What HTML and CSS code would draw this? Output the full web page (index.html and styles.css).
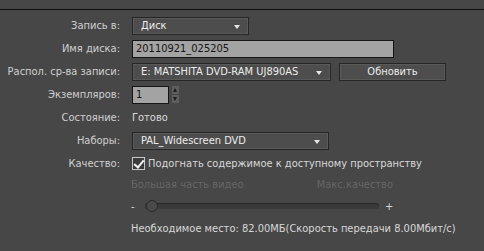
FILE: index.html
```html
<!DOCTYPE html>
<html lang="ru">
<head>
    <meta charset="UTF-8">
    <title>Запись на диск</title>
    <link rel="stylesheet" href="styles.css">
</head>
<body>
    <div class="topbar"></div>

    <div class="form">
        <label class="label">Запись в:</label>
        <div class="field">
            <div class="select w-disk">Диск<span class="arrow"></span></div>
        </div>

        <label class="label">Имя диска:</label>
        <div class="field">
            <div class="textbox w-name">20110921_025205</div>
        </div>

        <label class="label">Распол. ср-ва записи:</label>
        <div class="field">
            <div class="select w-drive">E: MATSHITA DVD-RAM UJ890AS<span class="arrow"></span></div>
            <button class="button">Обновить</button>
        </div>

        <label class="label">Экземпляров:</label>
        <div class="field">
            <div class="textbox w-copies">1</div>
            <div class="spin">
                <span class="spin-up"></span>
                <span class="spin-down"></span>
            </div>
        </div>

        <label class="label">Состояние:</label>
        <div class="field value">Готово</div>

        <label class="label">Наборы:</label>
        <div class="field">
            <div class="select w-preset">PAL_Widescreen DVD<span class="arrow"></span></div>
        </div>

        <label class="label">Качество:</label>
        <div class="field value">
            <span class="check"></span>
            Подогнать содержимое к доступному пространству
        </div>
    </div>

    <div class="quality">
        <div class="quality-labels">
            <span>Большая часть видео</span>
            <span>Макс.качество</span>
        </div>
        <div class="slider-row">
            <span class="sign">-</span>
            <div class="track"><span class="thumb"></span></div>
            <span class="sign">+</span>
        </div>
        <div class="info">Необходимое место: 82.00МБ(Скорость передачи 8.00Мбит/с)</div>
    </div>
</body>
</html>
```

FILE: styles.css
```css
* {
    margin: 0;
    padding: 0;
    box-sizing: border-box;
}

body {
    font-family: 'DejaVu Sans Condensed', 'DejaVu Sans', Tahoma, sans-serif;
    font-size: 11px;
    background-color: #474747;
    color: #d2d2d2;
    width: 484px;
    height: 251px;
    overflow: hidden;
}

.topbar {
    height: 10px;
    border-bottom: 1px solid #0e0e0e;
}

.form {
    display: grid;
    grid-template-columns: 120px 1fr;
    grid-auto-rows: 23px;
    column-gap: 12px;
    align-items: center;
    padding-top: 4px;
}

.label {
    text-align: right;
    color: #cfcfcf;
    white-space: nowrap;
}

.field {
    display: flex;
    align-items: center;
    gap: 8px;
}

.value {
    color: #d8d8d8;
    gap: 3px;
}

.select,
.button {
    position: relative;
    height: 18px;
    line-height: 16px;
    background-color: #4d4d4d;
    border: 1px solid #262626;
    box-shadow: inset 0 0 0 1px #5a5a5a;
    color: #ececec;
    padding-left: 8px;
    white-space: nowrap;
}

.arrow {
    position: absolute;
    right: 8px;
    top: 7px;
    border-left: 3px solid transparent;
    border-right: 3px solid transparent;
    border-top: 4px solid #e6e6e6;
}

.w-disk { width: 117px; }
.w-drive { width: 199px; }
.w-preset { width: 197px; }

.button {
    width: 107px;
    padding: 0;
    text-align: center;
    font-family: inherit;
    font-size: 11px;
}

.textbox {
    height: 18px;
    line-height: 16px;
    background-color: #a3a3a3;
    border: 1px solid #151515;
    color: #141414;
    padding-left: 3px;
}

.w-name { width: 262px; }
.w-copies { width: 37px; }

.spin {
    display: flex;
    flex-direction: column;
    gap: 1px;
    margin-left: -5px;
}

.spin span {
    width: 7px;
    height: 8px;
    background-color: #5e5e5e;
    position: relative;
}

.spin-up::after,
.spin-down::after {
    content: "";
    position: absolute;
    left: 1px;
    border-left: 2.5px solid transparent;
    border-right: 2.5px solid transparent;
}

.spin-up::after {
    top: 2px;
    border-bottom: 4px solid #1e1e1e;
}

.spin-down::after {
    top: 2px;
    border-top: 4px solid #1e1e1e;
}

.check {
    position: relative;
    width: 13px;
    height: 13px;
    border: 1px solid #c8c8c8;
    background-color: #3c3c3c;
}

.check::after {
    content: "";
    position: absolute;
    left: 3px;
    top: 0;
    width: 4px;
    height: 8px;
    border-right: 2px solid #f0f0f0;
    border-bottom: 2px solid #f0f0f0;
    transform: rotate(40deg);
}

.quality {
    margin-left: 131px;
    width: 262px;
}

.quality-labels {
    display: flex;
    justify-content: space-between;
    color: #666666;
    margin-top: 3px;
    height: 18px;
}

.slider-row {
    display: flex;
    align-items: center;
    gap: 6px;
    height: 20px;
}

.sign {
    color: #d8d8d8;
    width: 8px;
}

.track {
    position: relative;
    flex: 1;
    height: 6px;
    border-radius: 3px;
    background-color: #3a3a3a;
    box-shadow: inset 0 1px 1px #2a2a2a;
}

.thumb {
    position: absolute;
    left: 1px;
    top: -3px;
    width: 12px;
    height: 12px;
    border-radius: 50%;
    background-color: #4a4a4a;
    border: 1px solid #2a2a2a;
}

.info {
    margin-top: 6px;
    white-space: nowrap;
    color: #d8d8d8;
}
```
